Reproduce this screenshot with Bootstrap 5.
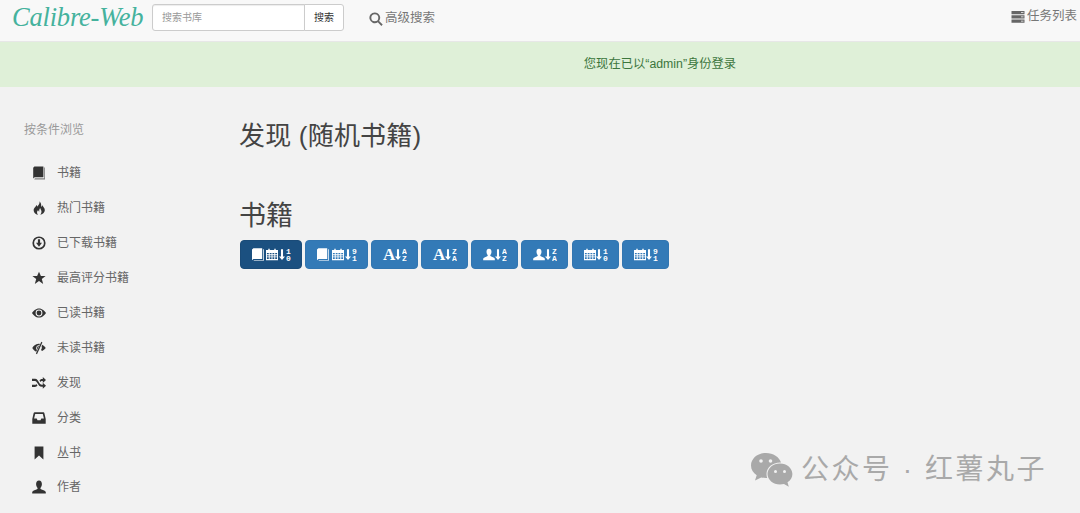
<!DOCTYPE html>
<html lang="zh-CN">
<head>
<meta charset="utf-8">
<title>Calibre-Web</title>
<link href="https://cdn.jsdelivr.net/npm/bootstrap@5.3.0/dist/css/bootstrap.min.css" rel="stylesheet">
<style>
html,body{height:513px;overflow:hidden}
body{background:#f2f2f2;font-family:"Liberation Sans","Noto Sans CJK SC",sans-serif;color:#444;font-size:12px}
.top-bar{height:42px;background:#f8f8f8;border-bottom:1px solid #e7e7e7;padding:0 3px 0 12px}
.brand-text{font-family:"Liberation Serif",serif;font-style:italic;font-size:26.5px;color:#45b29d;width:140px;flex:none;line-height:34px;margin-bottom:8px;white-space:nowrap;letter-spacing:-.2px;text-decoration:none}
.find-group{width:192px;height:27px;margin-bottom:6px}
.find-group .form-control{font-size:10px;border-radius:3px 0 0 3px;border-color:#ccc;padding:0 9px;height:27px;min-height:0;box-shadow:inset 0 1px 1px rgba(0,0,0,.075)}
.find-group .form-control::placeholder{color:#999}
.find-group .btn{font-size:10px;height:27px;width:40px;flex:none;padding:0;background:#fff;border:1px solid #ccc;border-radius:0 3px 3px 0;color:#333;margin-left:-1px;white-space:nowrap}
.top-link{color:#777;font-size:12.5px;text-decoration:none;display:flex;align-items:center}
.adv-link{margin-left:25px;margin-bottom:4px}
.adv-link svg{margin-right:2px}
.task-link{margin-bottom:8px}
.task-link svg{margin-right:2px}
.top-link svg{color:#666}
.flash-bar{height:45px;background:#dff0d8;color:#3c763d;font-size:12.3px;padding-left:240px;display:flex;align-items:center;justify-content:center}
.side-col{width:240px;padding:0 0 0 24px;flex:none}
.side-title{color:#999;font-size:12px;line-height:18px;margin-top:34px;margin-bottom:17px}
.side-nav{margin-left:8px}
.side-nav .nav-link{height:34.9px;padding:0;color:#666;font-size:12px;display:flex;align-items:center}
.side-nav svg{width:14px;height:14px;color:#333;margin-right:11px;flex:none}
.main-col{flex:1;padding-top:33px;margin-left:-1px}
.page-head{font-size:26px;font-weight:400;line-height:32px;color:#444;margin:0;letter-spacing:.2px}
.sect-head{font-size:27px;font-weight:400;line-height:32px;color:#444;margin:48px 0 8px}
.sort-row{display:flex;gap:3px;margin-left:1px}
.sort-btn{height:29px;padding:0 10px 0 11px;background:#337ab7;border:1px solid #3276b1;border-radius:4px;display:flex;align-items:center;color:#fff;text-decoration:none}
.sort-btn.is-on{background:#1b5080;border-color:#1a4b78}
.sort-btn:hover{background:#337ab7;color:#fff}
.sort-btn svg{display:block;flex:none}
.sort-a{font-family:"Liberation Serif",serif;font-weight:700;font-size:17px;line-height:1;width:12px}
.book-pic{margin-right:2px}
.book-wide{margin-right:3px}
.arrow-pic{margin-right:1px}
.cal-first{margin-right:1px}
.cal-solo{margin-left:1px}
.tiny{font-family:"Liberation Mono",monospace;font-size:8px;font-weight:700;fill:#fff}
.mark-wrap{position:absolute;left:750px;top:452px;display:flex;align-items:center;color:#a9a9a9;font-size:28px;letter-spacing:2.5px;line-height:36px;white-space:nowrap}
.mark-wrap svg{margin-right:8px}
</style>
</head>
<body>
<svg width="0" height="0" class="position-absolute">
<defs>
<symbol id="i-book" viewBox="0 0 14 14"><path fill="currentColor" d="M1.200 1.800 2.400.6H11.400V11.200H2.600L1.200 12.400Z"/><path fill="currentColor" opacity=".6" d="M12.200 1.600H13V13.400H2.200L3 12.200H12.200Z"/></symbol>
<symbol id="i-fire" viewBox="0 0 14 14"><path fill="currentColor" fill-rule="evenodd" d="M7.300.2C8.400 2.600 6 4 5.600 5.700 5.300 4.900 4.900 4.500 4.200 4.100 4.400 5.800 1 7.200 1.800 10.200 2.400 12.300 4.300 13.500 6.100 13.700 4.800 12.300 4.600 10.400 6.100 8.900 6.300 9.900 6.900 10.300 7.300 10.500 7.100 9.200 7.400 8 8.200 7.100 8.300 8.600 10 9.700 9.400 11.500 9.200 12.300 8.800 13 8.200 13.700 10.500 13.500 12.800 11.500 12.800 9 12.800 7 11 5.800 10.300 4.300 10 5.200 9.600 5.700 9 6 9.600 3.800 9.200 1.800 7.300.2Z"/></symbol>
<symbol id="i-down" viewBox="0 0 14 14"><path fill="currentColor" fill-rule="evenodd" d="M7 .4a6.600 6.600 0 1 0 0 13.200A6.600 6.600 0 0 0 7 .4Zm0 1.700a4.900 4.900 0 1 1 0 9.800 4.900 4.900 0 0 1 0-9.800Z"/><path fill="currentColor" d="M5.900 3.200H8.100V6.800H10L7 10.800 4 6.800H5.900Z"/></symbol>
<symbol id="i-star" viewBox="0 0 14 14"><path fill="currentColor" d="M7 .7 8.900 5H13.600L9.800 8 11.200 13 7 10.100 2.800 13 4.200 8 .4 5H5.100Z"/></symbol>
<symbol id="i-eye" viewBox="0 0 14 14"><path fill="currentColor" fill-rule="evenodd" d="M7 2.400C3.800 2.400 1.200 5 0 7 1.200 9 3.800 11.600 7 11.600S12.800 9 14 7C12.800 5 10.200 2.400 7 2.400ZM7 3.600A3.400 3.400 0 1 1 7 10.400 3.400 3.400 0 0 1 7 3.600Z"/><circle cx="7" cy="7" r="2.400" fill="currentColor"/></symbol>
<symbol id="i-eyex" viewBox="0 0 14 14"><path fill="currentColor" fill-rule="evenodd" d="M6.500 2.700C3.500 2.800 1.300 5 .3 7 1 8.400 2.400 10 4.200 10.800L5 9.300A3.200 3.200 0 0 1 7.400 3.900L8 2.900C7.500 2.800 7 2.700 6.500 2.700ZM10.300 3.800 9.600 5.100C10.100 6.500 9.900 7.900 9 9L10.100 10C11.800 9.200 13 8 13.700 7 12.900 5.800 11.800 4.500 10.300 3.800Z"/><path fill="currentColor" d="M9.300.7 10.400 1.400 5 13.300 3.900 12.600Z"/><path fill="currentColor" d="M7 4.800 5.400 8.400C4.500 7 5.300 5.100 7 4.800Z"/></symbol>
<symbol id="i-rand" viewBox="0 0 14 14"><path fill="currentColor" d="M0 2.800H3C5.200 2.800 6 4.800 6.900 6.200 7.700 7.600 8.400 8.700 10 8.700H10.800V6.800L14 9.800 10.800 12.800V10.800H9.800C7.500 10.800 6.500 9 5.500 7.300 4.700 6 4.200 5 3 5H0ZM0 8.800H2.900C3.500 8.800 4 8.400 4.400 7.900L5.500 9.800C4.800 10.500 3.900 10.900 3 10.900H0ZM7.500 4.300C8.200 3.500 9 2.900 9.900 2.900H10.800V1L14 4 10.800 7V5H10C9.300 5 8.900 5.500 8.500 6.100Z"/></symbol>
<symbol id="i-inbox" viewBox="0 0 14 14"><path fill="currentColor" fill-rule="evenodd" d="M2.800 1.300H11.200C11.900 1.300 12.200 1.700 12.400 2.300L13.700 8V12.800H.3V8L1.600 2.300C1.800 1.700 2.100 1.300 2.800 1.300ZM3.200 2.900 2.100 7.600H4.700L5.500 9.200H8.500L9.300 7.600H11.900L10.800 2.900Z"/></symbol>
<symbol id="i-mark" viewBox="0 0 14 14"><path fill="currentColor" d="M2.600.6H11.400V13.500L7 9.600 2.600 13.500Z"/></symbol>
<symbol id="i-user" viewBox="0 0 14 14"><path fill="currentColor" d="M7 .4C8.900.4 9.900 2 9.900 4 9.900 5.700 9.200 7.200 8.400 8 8.300 8.800 8.700 9.200 9.600 9.600 11.200 10.300 13.500 10.900 13.800 12V13.400H.2V12C.5 10.900 2.800 10.300 4.400 9.600 5.300 9.200 5.700 8.800 5.600 8 4.800 7.200 4.100 5.700 4.100 4 4.100 2 5.100.4 7 .4Z"/></symbol>
<symbol id="i-tasks" viewBox="0 0 14 14"><path fill="currentColor" d="M.5 1H13.500V4.200H.5ZM.5 5.200H13.500V8.400H.5ZM.5 9.400H13.500V12.800H.5Z"/><path fill="#f8f8f8" d="M10 2.200H12.500V3H10ZM10 6.400H12.500V7.200H10ZM10 10.700H12.500V11.500H10Z"/></symbol>
<symbol id="i-find" viewBox="0 0 14 14"><path fill="currentColor" fill-rule="evenodd" d="M5.800.4a5.400 5.400 0 0 1 4.300 8.600L13.700 12.600 12.400 13.900 8.800 10.300A5.400 5.400 0 1 1 5.800.4Zm0 1.900a3.500 3.500 0 1 0 0 7 3.500 3.500 0 0 0 0-7Z"/></symbol>
<symbol id="b-book" viewBox="0 0 12 13"><path fill="#fff" d="M0 1.500 1.400.2H10.200V11H1.400L0 12.200Z"/><path fill="#fff" opacity=".75" d="M11 1.200H12V12.800H1.400L2.200 12H11Z"/></symbol>
<symbol id="b-cal" viewBox="0 0 13 13"><path fill="#fff" fill-rule="evenodd" d="M0 1.600H2.500V.4H4V1.600H9V.4H10.500V1.600H13V12.800H0ZM1 4.800V6.200H3V4.800ZM4 4.800V6.200H6V4.800ZM7 4.800V6.200H9V4.800ZM10 4.800V6.200H12V4.800ZM1 7.200V8.600H3V7.200ZM4 7.200V8.600H6V7.200ZM7 7.200V8.600H9V7.200ZM10 7.200V8.600H12V7.200ZM1 9.600V11.300H3V9.600ZM4 9.600V11.300H6V9.600ZM7 9.600V11.300H9V9.600ZM10 9.600V11.300H12V9.600Z"/></symbol>
<symbol id="b-user" viewBox="0 0 13 13"><path fill="#fff" d="M6.500.3C8.300.3 9.200 1.600 9.200 3.500 9.200 5 8.600 6.400 7.800 7.200 7.700 8 8.100 8.400 9 8.800 10.500 9.400 12.500 10 12.800 11V12.700H.2V11C.5 10 2.500 9.400 4 8.800 4.900 8.400 5.300 8 5.200 7.200 4.400 6.400 3.800 5 3.800 3.500 3.800 1.600 4.700.3 6.500.3Z"/></symbol>
<symbol id="b-arrow" viewBox="0 0 7 13"><path fill="#fff" d="M2.300.3H4.700V8.700H7L3.500 12.900 0 8.700H2.300Z"/></symbol>
</defs>
</svg>

<nav class="top-bar d-flex align-items-center">
  <a class="brand-text" href="#">Calibre-Web</a>
  <form class="input-group find-group flex-nowrap">
    <input class="form-control" type="text" placeholder="搜索书库">
    <button class="btn" type="button">搜索</button>
  </form>
  <a class="top-link adv-link" href="#"><svg width="14" height="14"><use href="#i-find"/></svg>高级搜索</a>
  <a class="top-link task-link ms-auto" href="#"><svg width="14" height="14"><use href="#i-tasks"/></svg>任务列表</a>
</nav>

<div class="flash-bar">您现在已以“admin”身份登录</div>

<div class="d-flex">
  <aside class="side-col">
    <div class="side-title">按条件浏览</div>
    <nav class="nav flex-column side-nav">
      <a class="nav-link" href="#"><svg><use href="#i-book"/></svg>书籍</a>
      <a class="nav-link" href="#"><svg><use href="#i-fire"/></svg>热门书籍</a>
      <a class="nav-link" href="#"><svg><use href="#i-down"/></svg>已下载书籍</a>
      <a class="nav-link" href="#"><svg><use href="#i-star"/></svg>最高评分书籍</a>
      <a class="nav-link" href="#"><svg><use href="#i-eye"/></svg>已读书籍</a>
      <a class="nav-link" href="#"><svg><use href="#i-eyex"/></svg>未读书籍</a>
      <a class="nav-link" href="#"><svg><use href="#i-rand"/></svg>发现</a>
      <a class="nav-link" href="#"><svg><use href="#i-inbox"/></svg>分类</a>
      <a class="nav-link" href="#"><svg><use href="#i-mark"/></svg>丛书</a>
      <a class="nav-link" href="#"><svg><use href="#i-user"/></svg>作者</a>
    </nav>
  </aside>
  <main class="main-col">
    <h2 class="page-head">发现 (随机书籍)</h2>
    <h2 class="sect-head">书籍</h2>
    <div class="sort-row">
      <a class="sort-btn is-on" href="#"><svg class="book-pic" width="12" height="13"><use href="#b-book"/></svg><svg class="cal-first" width="12" height="13"><use href="#b-cal"/></svg><svg class="arrow-pic" width="6" height="13"><use href="#b-arrow"/></svg><svg width="5" height="14"><text class="tiny" x="0" y="6">1</text><text class="tiny" x="0" y="13">0</text></svg></a>
      <a class="sort-btn" href="#"><svg class="book-wide" width="12" height="13"><use href="#b-book"/></svg><svg class="cal-first" width="12" height="13"><use href="#b-cal"/></svg><svg class="arrow-pic" width="6" height="13"><use href="#b-arrow"/></svg><svg width="5" height="14"><text class="tiny" x="0" y="6">9</text><text class="tiny" x="0" y="13">1</text></svg></a>
      <a class="sort-btn" href="#"><span class="sort-a">A</span><svg class="arrow-pic" width="6" height="13"><use href="#b-arrow"/></svg><svg width="5" height="14"><text class="tiny" x="0" y="6">A</text><text class="tiny" x="0" y="13">Z</text></svg></a>
      <a class="sort-btn" href="#"><span class="sort-a">A</span><svg class="arrow-pic" width="6" height="13"><use href="#b-arrow"/></svg><svg width="5" height="14"><text class="tiny" x="0" y="6">Z</text><text class="tiny" x="0" y="13">A</text></svg></a>
      <a class="sort-btn" href="#"><svg width="12" height="13"><use href="#b-user"/></svg><svg class="arrow-pic" width="6" height="13"><use href="#b-arrow"/></svg><svg width="5" height="14"><text class="tiny" x="0" y="6">A</text><text class="tiny" x="0" y="13">Z</text></svg></a>
      <a class="sort-btn" href="#"><svg width="12" height="13"><use href="#b-user"/></svg><svg class="arrow-pic" width="6" height="13"><use href="#b-arrow"/></svg><svg width="5" height="14"><text class="tiny" x="0" y="6">Z</text><text class="tiny" x="0" y="13">A</text></svg></a>
      <a class="sort-btn cal-solo" href="#"><svg width="12" height="13"><use href="#b-cal"/></svg><svg class="arrow-pic" width="6" height="13"><use href="#b-arrow"/></svg><svg width="5" height="14"><text class="tiny" x="0" y="6">1</text><text class="tiny" x="0" y="13">0</text></svg></a>
      <a class="sort-btn" href="#"><svg width="12" height="13"><use href="#b-cal"/></svg><svg class="arrow-pic" width="6" height="13"><use href="#b-arrow"/></svg><svg width="5" height="14"><text class="tiny" x="0" y="6">9</text><text class="tiny" x="0" y="13">1</text></svg></a>
    </div>
  </main>
</div>

<div class="mark-wrap">
  <svg width="43" height="36" viewBox="0 0 43 36"><path fill="#a9a9a9" d="M16 1C7.700 1 1 6.600 1 13.500c0 4 2.200 7.500 5.700 9.800L5 28.500l6.200-3.100c1.500.4 3 .6 4.800.6h1.200c-.5-1.300-.7-2.500-.7-3.900 0-6.400 6-11.500 13.500-11.500h1C29.300 5 23.200 1 16 1Z"/><path fill="#a9a9a9" d="M30 11.500c-6.900 0-12.500 4.700-12.500 10.500S23.100 32.500 30 32.500c1.400 0 2.700-.2 4-.5l4.800 2.700-1.300-4.400c3-2 4.900-4.900 4.900-8.300 0-5.800-5.500-10.500-12.400-10.500Z"/><circle cx="11" cy="9" r="1.800" fill="#f2f2f2"/><circle cx="20.500" cy="9" r="1.800" fill="#f2f2f2"/><circle cx="25.500" cy="19.500" r="1.500" fill="#f2f2f2"/><circle cx="34.500" cy="19.500" r="1.500" fill="#f2f2f2"/></svg>
  <span>公众号 · 红薯丸子</span>
</div>
</body>
</html>
